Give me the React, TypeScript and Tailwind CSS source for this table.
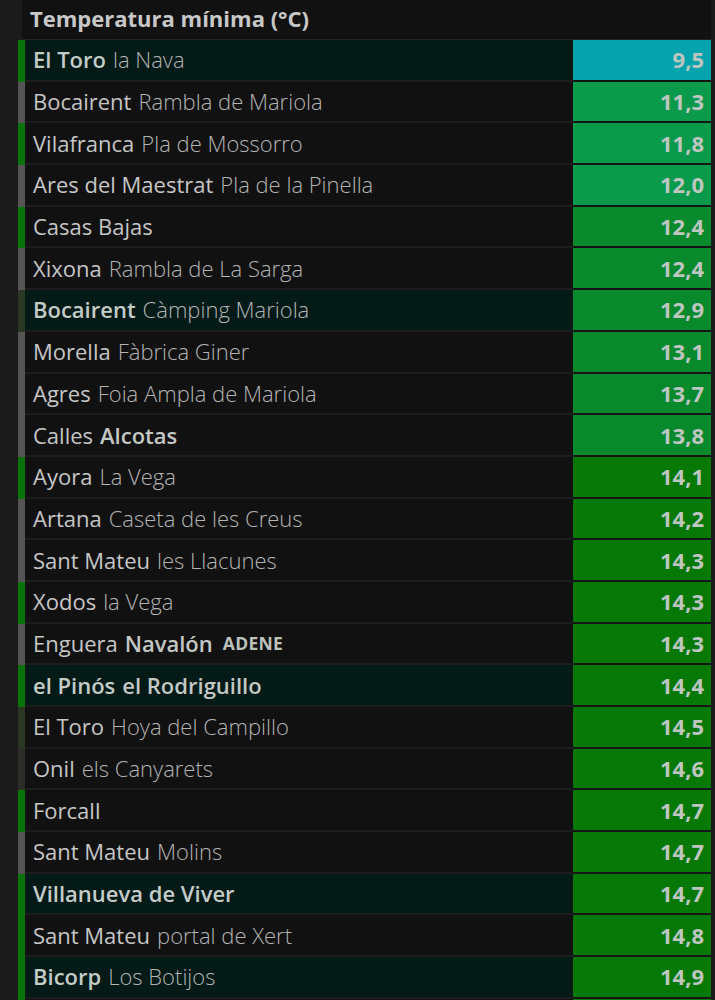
import React from "react";

type Row = {
  a: string;
  b?: string;
  aBold?: boolean;
  bBold?: boolean;
  extra?: string;
  hl?: boolean;
  stripe: string;
  v: string;
  c: string;
};

const G = "bg-[#0a720a]";
const GR = "bg-[#555555]";
const DG = "bg-[#2a3824]";

const rows: Row[] = [
  { a: "El Toro", b: "la Nava", aBold: true, hl: true, stripe: G, v: "9,5", c: "bg-[#05a4ac]" },
  { a: "Bocairent", b: "Rambla de Mariola", stripe: GR, v: "11,3", c: "bg-[#0a9a4b]" },
  { a: "Vilafranca", b: "Pla de Mossorro", stripe: G, v: "11,8", c: "bg-[#0a9a4b]" },
  { a: "Ares del Maestrat", b: "Pla de la Pinella", stripe: GR, v: "12,0", c: "bg-[#0a9a4b]" },
  { a: "Casas Bajas", stripe: G, v: "12,4", c: "bg-[#088a2c]" },
  { a: "Xixona", b: "Rambla de La Sarga", stripe: GR, v: "12,4", c: "bg-[#088a2c]" },
  { a: "Bocairent", b: "Càmping Mariola", aBold: true, hl: true, stripe: DG, v: "12,9", c: "bg-[#088a2c]" },
  { a: "Morella", b: "Fàbrica Giner", stripe: GR, v: "13,1", c: "bg-[#088a2c]" },
  { a: "Agres", b: "Foia Ampla de Mariola", stripe: GR, v: "13,7", c: "bg-[#088a2c]" },
  { a: "Calles", b: "Alcotas", bBold: true, stripe: GR, v: "13,8", c: "bg-[#088a2c]" },
  { a: "Ayora", b: "La Vega", stripe: G, v: "14,1", c: "bg-[#067806]" },
  { a: "Artana", b: "Caseta de les Creus", stripe: GR, v: "14,2", c: "bg-[#067806]" },
  { a: "Sant Mateu", b: "les Llacunes", stripe: GR, v: "14,3", c: "bg-[#067806]" },
  { a: "Xodos", b: "la Vega", stripe: G, v: "14,3", c: "bg-[#067806]" },
  { a: "Enguera", b: "Navalón", bBold: true, extra: "ADENE", stripe: GR, v: "14,3", c: "bg-[#067806]" },
  { a: "el Pinós", b: "el Rodriguillo", aBold: true, bBold: true, hl: true, stripe: G, v: "14,4", c: "bg-[#067806]" },
  { a: "El Toro", b: "Hoya del Campillo", stripe: DG, v: "14,5", c: "bg-[#067806]" },
  { a: "Onil", b: "els Canyarets", stripe: "bg-[#2a2e26]", v: "14,6", c: "bg-[#067806]" },
  { a: "Forcall", stripe: G, v: "14,7", c: "bg-[#067806]" },
  { a: "Sant Mateu", b: "Molins", stripe: GR, v: "14,7", c: "bg-[#067806]" },
  { a: "Villanueva de Viver", aBold: true, hl: true, stripe: G, v: "14,7", c: "bg-[#067806]" },
  { a: "Sant Mateu", b: "portal de Xert", stripe: G, v: "14,8", c: "bg-[#067806]" },
  { a: "Bicorp", b: "Los Botijos", aBold: true, hl: true, stripe: G, v: "14,9", c: "bg-[#067806]" },
  { a: "", stripe: G, v: "", c: "bg-[#067806]" },
];

export default function App() {
  return (
    <div
      className="w-full min-h-screen bg-[#1b1b1b] flex"
      style={{ fontFamily: '"Open Sans", "Noto Sans", sans-serif' }}
    >
      <div className="ml-[18px] w-[693px] flex flex-col">
        <div className="ml-[4px] h-[40px] bg-[#111111] flex items-center pl-[8px] pb-[3px] border-b border-[#232323]">
          <span className="text-[22px] font-bold text-[#c8c8c8]">
            Temperatura mínima (°C)
          </span>
        </div>
        {rows.map((r, i) => (
          <div key={i} className="flex h-[41.7px] shrink-0">
            <div className={`w-[7px] shrink-0 ${r.stripe}`} />
            <div
              className={`flex-1 flex items-center pl-[8px] border-b-2 border-[#1d1d1d] text-[22px] whitespace-nowrap overflow-hidden ${
                r.hl ? "bg-[#031a17]" : "bg-[#111111]"
              }`}
            >
              <span
                className={
                  r.aBold ? "font-semibold text-[#c4ccc8]" : "font-normal text-[#c6c6c6]"
                }
              >
                {r.a}
              </span>
              {r.b && (
                <span
                  className={`ml-[7px] ${
                    r.bBold ? "font-semibold text-[#c4c8c4]" : "font-light text-[#b4b4b4]"
                  }`}
                >
                  {r.b}
                </span>
              )}
              {r.extra && (
                <span className="ml-[10px] text-[17.5px] font-bold text-[#bcc2bc] tracking-[0.3px]">
                  {r.extra}
                </span>
              )}
            </div>
            <div
              className={`w-[138px] shrink-0 flex items-center justify-end pr-[7px] border-b-2 border-[#151515] ${r.c}`}
            >
              <span className="text-[22px] font-bold text-[#bfc6c1]">{r.v}</span>
            </div>
          </div>
        ))}
      </div>
    </div>
  );
}
